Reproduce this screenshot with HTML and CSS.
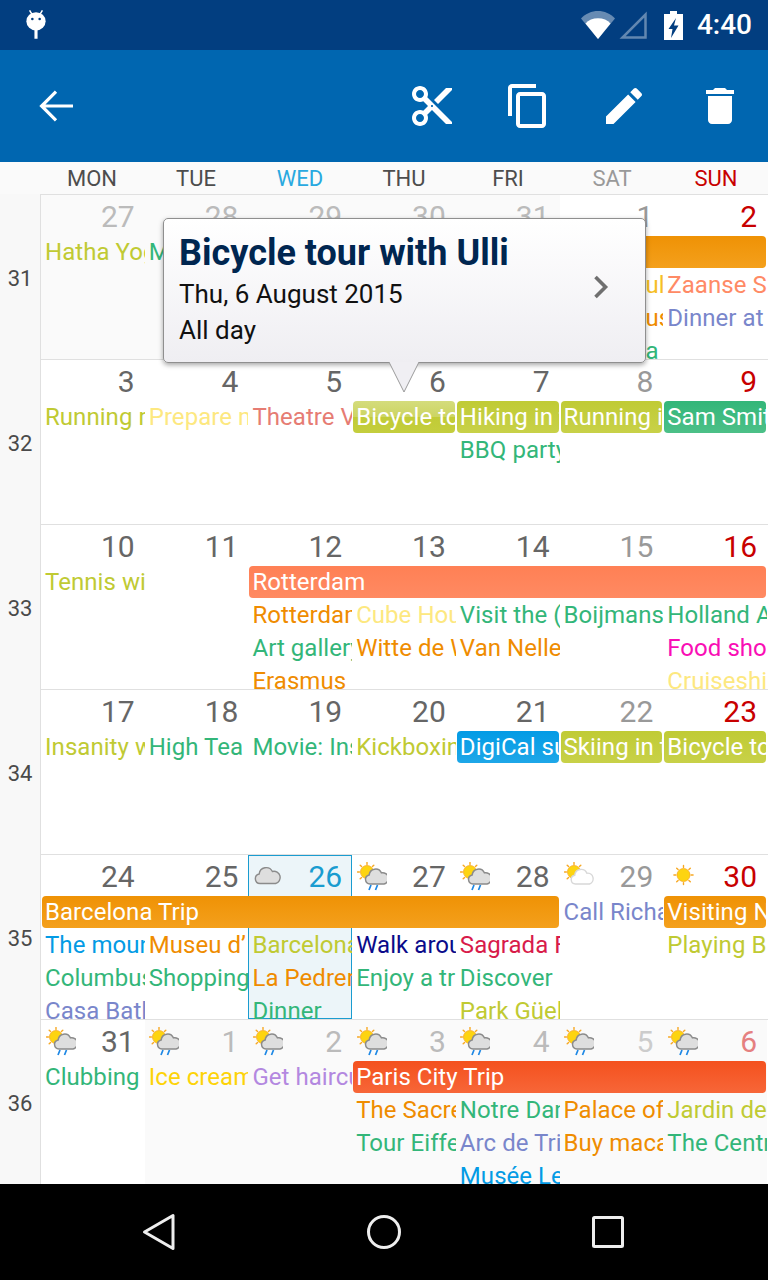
FILE: index.html
```html
<!DOCTYPE html>
<html lang="en">
<head>
<meta charset="utf-8">
<title>Calendar</title>
<link rel="stylesheet" href="styles.css">
</head>
<body>
<svg class="sprite" xmlns="http://www.w3.org/2000/svg">
  <defs>
    <g id="rays" stroke="#f7a823" stroke-width="1.4" stroke-linecap="round">
      <path d="M0-9.6V-7.6M0 9.6V7.6M-9.6 0H-7.6M9.6 0H7.6M-6.8-6.8L-5.4-5.4M6.8 6.8L5.4 5.4M-6.8 6.8L-5.4 5.4M6.8-6.8L5.4-5.4"/>
    </g>
    <path id="cloud" d="M9.5 24.5a4.6 4.6 0 0 1-.8-9.1 6.4 6.4 0 0 1 12.2-2.1 5.7 5.7 0 0 1 2.6 11.2z"/>
  </defs>
  <symbol id="w-rain" viewBox="0 0 30 30">
    <use href="#rays" x="10" y="10"/>
    <circle cx="10" cy="10" r="6.500" fill="#fdd410" stroke="#f7a823" stroke-width=".8"/>
    <use href="#cloud" transform="translate(3.5 -2.5)" fill="#dedede" stroke="#8b8b8b" stroke-width="1.5"/>
    <path d="M14 23l-2 5M20.500 23l-2 5" stroke="#1e88e5" stroke-width="1.700" fill="none"/>
  </symbol>
  <symbol id="w-cloud" viewBox="0 0 30 30">
    <path d="M7 21.500a4.800 4.800 0 0 1-.8-9.500 7 7 0 0 1 13.200-2.500 6.200 6.200 0 0 1 3.200 12z" fill="#dedede" stroke="#8b8b8b" stroke-width="1.400"/>
  </symbol>
  <symbol id="w-pale" viewBox="0 0 30 30">
    <use href="#rays" x="10" y="10"/>
    <circle cx="10" cy="10" r="6.500" fill="#fdd410" stroke="#f7a823" stroke-width=".8"/>
    <path d="M11.500 22a4.400 4.400 0 0 1-.8-8.700 6.400 6.400 0 0 1 12.200-2.100 5.600 5.600 0 0 1 2.600 10.800z" fill="#fff" stroke="#d8d8d8" stroke-width="1.400"/>
  </symbol>
  <symbol id="w-sun" viewBox="0 0 30 30">
    <use href="#rays" x="15.500" y="13"/>
    <circle cx="15.500" cy="13" r="6.500" fill="#fdd410" stroke="#f7a823" stroke-width=".8"/>
  </symbol>
</svg>

<div class="screen">
  <header class="status">
    <svg class="robot" viewBox="0 0 24 32" aria-hidden="true">
      <path d="M5 0L8 5M19 0L16 5" stroke="#fff" stroke-width="1.600"/>
      <ellipse cx="12" cy="12" rx="10.500" ry="10" fill="#fff"/>
      <circle cx="8" cy="9.500" r="1.400" fill="#023e80"/>
      <circle cx="16" cy="9.500" r="1.400" fill="#023e80"/>
      <rect x="10.300" y="21" width="3.400" height="10" fill="#fff"/>
    </svg>
    <div class="status-right">
      <svg class="st-wifi" viewBox="0 0 34 28" aria-hidden="true">
        <path d="M0 7.500C9-2.500 25-2.500 34 7.500L17 28z" fill="#fff" opacity=".4"/>
        <path d="M4.500 12.500C10 5.500 24 5.500 29.500 12.500L17 28z" fill="#fff"/>
      </svg>
      <svg class="st-signal" viewBox="0 0 28 28" aria-hidden="true">
        <path d="M26.500 3.500V26.500H3.500z" fill="none" stroke="#fff" stroke-opacity=".38" stroke-width="2.500"/>
      </svg>
      <svg class="st-batt" viewBox="0 0 19 29" aria-hidden="true">
        <path fill-rule="evenodd" d="M6 0h7v3h6v26H0V3h6zM12 7L4.500 18H8.500L7 27L14.500 14.500H10z" fill="#fff"/>
      </svg>
      <span class="clock">4:40</span>
    </div>
  </header>

  <nav class="appbar">
    <button class="ib" type="button" aria-label="Back"><svg viewBox="0 0 24 24"><path d="M20.500 12H5.500M12 4.800L4.800 12L12 19.200" fill="none" stroke="#fff" stroke-width="1.600"/></svg></button>
    <div class="actions">
      <button class="ib" type="button" aria-label="Cut"><svg viewBox="0 0 24 24"><path fill="#fff" d="M9.640 7.640c.23-.5.36-1.050.36-1.640 0-2.210-1.790-4-4-4S2 3.790 2 6s1.790 4 4 4c.59 0 1.140-.13 1.640-.36L10 12l-2.360 2.360C7.140 14.130 6.590 14 6 14c-2.210 0-4 1.790-4 4s1.790 4 4 4 4-1.790 4-4c0-.59-.13-1.140-.36-1.640L12 14l7 7h3v-1L9.640 7.640zM6 8c-1.100 0-2-.89-2-2s.9-2 2-2 2 .89 2 2-.9 2-2 2zm0 12c-1.100 0-2-.89-2-2s.9-2 2-2 2 .89 2 2-.9 2-2 2zm6-7.500c-.28 0-.5-.22-.5-.5s.22-.5.5-.5.5.22.5.5-.22.5-.5.5zM19 3l-6 6 2 2 7-7V3z"/></svg></button>
      <button class="ib" type="button" aria-label="Copy"><svg viewBox="0 0 24 24"><path fill="#fff" d="M16 1H4c-1.100 0-2 .9-2 2v14h2V3h12V1zm3 4H8c-1.100 0-2 .9-2 2v14c0 1.100.9 2 2 2h11c1.100 0 2-.9 2-2V7c0-1.100-.9-2-2-2zm0 16H8V7h11v14z"/></svg></button>
      <button class="ib" type="button" aria-label="Edit"><svg viewBox="0 0 24 24"><path fill="#fff" d="M3 17.250V21h3.750L17.810 9.940l-3.750-3.750L3 17.250zM20.710 7.040c.39-.39.39-1.020 0-1.410l-2.340-2.340c-.39-.39-1.020-.39-1.410 0l-1.830 1.830 3.750 3.750 1.830-1.830z"/></svg></button>
      <button class="ib" type="button" aria-label="Delete"><svg viewBox="0 0 24 24"><path fill="#fff" d="M6 19c0 1.100.9 2 2 2h8c1.100 0 2-.9 2-2V7H6v12zM19 4h-3.500l-1-1h-5l-1 1H5v2h14V4z"/></svg></button>
    </div>
  </nav>

  <div class="dow">
    <span>MON</span><span>TUE</span><span class="wed">WED</span><span>THU</span><span>FRI</span><span class="sat">SAT</span><span class="sun">SUN</span>
  </div>

  <main class="cal">
    <section class="week">
      <div class="wn">31</div>
      <div class="grid">
        <div class="off c1-5"></div>
        <div class="d c1 n-off">27</div><div class="d c2 n-off">28</div><div class="d c3 n-off">29</div><div class="d c4 n-off">30</div><div class="d c5 n-off">31</div><div class="d c6 n-sat">1</div><div class="d c7 n-sun">2</div>
        <div class="e r1 c1 lime">Hatha Yoga</div>
        <div class="e r1 c2 green">M</div>
        <div class="e bar r1 c6 s2 b-orange"></div>
        <div class="e tail r2 c6 amber">ul</div>
        <div class="e r2 c7 coral">Zaanse Schans</div>
        <div class="e tail r3 c6 orange">us</div>
        <div class="e r3 c7 peri">Dinner at</div>
        <div class="e tail r4 c6 green">a</div>
      </div>
    </section>

    <section class="week">
      <div class="wn">32</div>
      <div class="grid">
        <div class="d c1">3</div><div class="d c2">4</div><div class="d c3">5</div><div class="d c4">6</div><div class="d c5">7</div><div class="d c6 n-sat">8</div><div class="d c7 n-sun">9</div>
        <div class="e r1 c1 lime">Running race</div>
        <div class="e r1 c2 pale">Prepare meal</div>
        <div class="e r1 c3 salmon">Theatre Visit</div>
        <div class="e bar r1 c4 b-sel">Bicycle tour</div>
        <div class="e bar r1 c5 b-lime">Hiking in the</div>
        <div class="e bar r1 c6 b-lime">Running in</div>
        <div class="e bar r1 c7 b-green">Sam Smith</div>
        <div class="e r2 c5 green">BBQ party</div>
      </div>
    </section>

    <section class="week">
      <div class="wn">33</div>
      <div class="grid">
        <div class="d c1">10</div><div class="d c2">11</div><div class="d c3">12</div><div class="d c4">13</div><div class="d c5">14</div><div class="d c6 n-sat">15</div><div class="d c7 n-sun">16</div>
        <div class="e r1 c1 lime">Tennis with</div>
        <div class="e bar r1 c3 s5 b-coral">Rotterdam</div>
        <div class="e r2 c3 orange">Rotterdam</div>
        <div class="e r2 c4 pale">Cube Houses</div>
        <div class="e r2 c5 green">Visit the (</div>
        <div class="e r2 c6 green">Boijmans</div>
        <div class="e r2 c7 green">Holland Amerika</div>
        <div class="e r3 c3 green">Art gallery</div>
        <div class="e r3 c4 orange">Witte de With</div>
        <div class="e r3 c5 orange">Van Nelle</div>
        <div class="e r3 c7 mag">Food show</div>
        <div class="e r4 c3 orange">Erasmus</div>
        <div class="e r4 c7 pale">Cruiseship</div>
      </div>
    </section>

    <section class="week">
      <div class="wn">34</div>
      <div class="grid">
        <div class="d c1">17</div><div class="d c2">18</div><div class="d c3">19</div><div class="d c4">20</div><div class="d c5">21</div><div class="d c6 n-sat">22</div><div class="d c7 n-sun">23</div>
        <div class="e r1 c1 lime">Insanity work</div>
        <div class="e r1 c2 green">High Tea</div>
        <div class="e r1 c3 green">Movie: Inside</div>
        <div class="e r1 c4 lime">Kickboxing</div>
        <div class="e bar r1 c5 b-blue">DigiCal support</div>
        <div class="e bar r1 c6 b-lime">Skiing in the</div>
        <div class="e bar r1 c7 b-lime">Bicycle tour</div>
      </div>
    </section>

    <section class="week">
      <div class="wn">35</div>
      <div class="grid">
        <div class="today"></div>
        <div class="d c1">24</div>
        <div class="d c2">25</div>
        <div class="d c3 n-today"><svg class="wx"><use href="#w-cloud"/></svg>26</div>
        <div class="d c4"><svg class="wx"><use href="#w-rain"/></svg>27</div>
        <div class="d c5"><svg class="wx"><use href="#w-rain"/></svg>28</div>
        <div class="d c6 n-sat"><svg class="wx"><use href="#w-pale"/></svg>29</div>
        <div class="d c7 n-sun"><svg class="wx"><use href="#w-sun"/></svg>30</div>
        <div class="e bar r1 c1 s5 b-orange">Barcelona Trip</div>
        <div class="e r1 c6 peri">Call Richard</div>
        <div class="e bar r1 c7 b-orange">Visiting Nina</div>
        <div class="e r2 c1 blue">The mountain</div>
        <div class="e r2 c2 orange">Museu d’</div>
        <div class="e r2 c3 lime">Barcelona</div>
        <div class="e r2 c4 navy">Walk around</div>
        <div class="e r2 c5 crim">Sagrada Familia</div>
        <div class="e r2 c7 lime">Playing Bass</div>
        <div class="e r3 c1 green">Columbus</div>
        <div class="e r3 c2 green">Shopping</div>
        <div class="e r3 c3 orange">La Pedrera</div>
        <div class="e r3 c4 green">Enjoy a trip</div>
        <div class="e r3 c5 green">Discover</div>
        <div class="e r4 c1 peri">Casa Batllo</div>
        <div class="e r4 c3 green">Dinner</div>
        <div class="e r4 c5 lime">Park Güell</div>
      </div>
    </section>

    <section class="week">
      <div class="wn">36</div>
      <div class="grid">
        <div class="off c2-7"></div>
        <div class="d c1"><svg class="wx"><use href="#w-rain"/></svg>31</div>
        <div class="d c2 n-off"><svg class="wx"><use href="#w-rain"/></svg>1</div>
        <div class="d c3 n-off"><svg class="wx"><use href="#w-rain"/></svg>2</div>
        <div class="d c4 n-off"><svg class="wx"><use href="#w-rain"/></svg>3</div>
        <div class="d c5 n-off"><svg class="wx"><use href="#w-rain"/></svg>4</div>
        <div class="d c6 n-off2"><svg class="wx"><use href="#w-rain"/></svg>5</div>
        <div class="d c7 n-sun-off"><svg class="wx"><use href="#w-rain"/></svg>6</div>
        <div class="e r1 c1 green">Clubbing with</div>
        <div class="e r1 c2 yell">Ice cream</div>
        <div class="e r1 c3 purple">Get haircut</div>
        <div class="e bar r1 c4 s4 b-red">Paris City Trip</div>
        <div class="e r2 c4 orange">The Sacre</div>
        <div class="e r2 c5 green">Notre Dame</div>
        <div class="e r2 c6 orange">Palace of</div>
        <div class="e r2 c7 lime">Jardin des</div>
        <div class="e r3 c4 green">Tour Eiffel</div>
        <div class="e r3 c5 peri">Arc de Triomphe</div>
        <div class="e r3 c6 orange">Buy macarons</div>
        <div class="e r3 c7 green">The Centre</div>
        <div class="e r4 c5 blue">Musée Le</div>
      </div>
    </section>
  </main>

  <footer class="navbar">
    <svg class="nv" viewBox="0 0 40 40" aria-hidden="true"><path d="M33 3.500V36.500L4.500 20z" fill="none" stroke="#eee" stroke-width="3" stroke-linejoin="round"/></svg>
    <svg class="nv" viewBox="0 0 40 40" aria-hidden="true"><circle cx="20" cy="20" r="15.500" fill="none" stroke="#eee" stroke-width="3"/></svg>
    <svg class="nv" viewBox="0 0 40 40" aria-hidden="true"><rect x="5.500" y="5.500" width="29" height="29" rx="1" fill="none" stroke="#eee" stroke-width="3"/></svg>
  </footer>

  <aside class="popup">
    <h1 class="p-title">Bicycle tour with Ulli</h1>
    <p class="p-line p-first">Thu, 6 August 2015</p>
    <p class="p-line">All day</p>
    <svg class="p-chev" viewBox="0 0 16 24" aria-hidden="true"><path d="M2.500 2L12.500 12L2.500 22" fill="none" stroke="#6f6f6f" stroke-width="3.600"/></svg>
    <svg class="p-tail" viewBox="0 0 32 31" aria-hidden="true"><path d="M1 0L16 30L31 0" fill="#f0eff3" stroke="#9a9a9a" stroke-width="1"/></svg>
  </aside>
</div>
</body>
</html>
```

FILE: styles.css
```css
* { box-sizing: border-box; }
html, body { margin: 0; padding: 0; }
body { width: 768px; height: 1280px; overflow: hidden; font-family: Roboto, "Liberation Sans", sans-serif; background: #fff; }
.sprite { display: none; }

.screen { position: relative; width: 768px; height: 1280px; display: flex; flex-direction: column; overflow: hidden; }

/* status bar */
.status { height: 50px; flex: none; background: #023e80; display: flex; align-items: center; justify-content: space-between; padding: 0 16px 0 25px; }
.robot { width: 22px; height: 30px; display: block; }
.status-right { display: flex; align-items: center; }
.st-wifi { width: 34px; height: 28px; margin-right: 4px; }
.st-signal { width: 28px; height: 28px; margin-right: 17px; }
.st-batt { width: 19px; height: 29px; margin-right: 14px; }
.clock { color: #fff; font-size: 28px; font-weight: 500; line-height: 32px; }

/* app bar */
.appbar { height: 112px; flex: none; background: #0066b0; display: flex; align-items: center; justify-content: space-between; padding-left: 8px; }
.actions { display: flex; }
.ib { width: 96px; height: 96px; padding: 0; border: 0; background: none; display: flex; align-items: center; justify-content: center; }
.ib svg { width: 48px; height: 48px; display: block; }

/* weekday header */
.dow { height: 32px; flex: none; background: #fafafa; padding: 0 0 0 40px; display: grid; grid-template-columns: repeat(7, 1fr); font-size: 22px; line-height: 33px; color: #4d4d4d; text-align: center; }
.dow .wed { color: #29a9e0; }
.dow .sat { color: #999; }
.dow .sun { color: #c80000; }

/* calendar */
.cal { flex: 1; min-height: 0; background: #f8f8f8; overflow: hidden; }
.week { height: 165px; display: flex; }
.wn { width: 41px; flex: none; border-right: 1px solid #e0e0e0; font-size: 22px; color: #4a4a4a; display: flex; align-items: center; justify-content: center; padding: 3px 0 0 0; }
.grid { flex: 1; min-width: 0; height: 165px; padding-right: 1px; border-top: 1px solid #e0e0e0; background: #fff; display: grid; grid-template-columns: repeat(7, 1fr); grid-template-rows: 41px 33px 33px 33px 24px; overflow: hidden; }

.off { grid-row: 1 / -1; background: #fafafa; }
.c1-5 { grid-column: 1 / 6; }
.c2-7 { grid-column: 2 / 8; }
.today { grid-row: 1 / -1; grid-column: 3; background: #ecf5f9; border: 1px solid #1a9cd0; }

.c1 { grid-column-start: 1; }
.c2 { grid-column-start: 2; }
.c3 { grid-column-start: 3; }
.c4 { grid-column-start: 4; }
.c5 { grid-column-start: 5; }
.c6 { grid-column-start: 6; }
.c7 { grid-column-start: 7; }
.s2 { grid-column-end: span 2; }
.s4 { grid-column-end: span 4; }
.s5 { grid-column-end: span 5; }
.r1 { grid-row: 2; }
.r2 { grid-row: 3; }
.r3 { grid-row: 4; }
.r4 { grid-row: 5; }

/* day number */
.d { grid-row: 1; position: relative; display: flex; justify-content: flex-end; padding-right: 10px; font-size: 30px; line-height: 44px; height: 41px; color: #666; }
.wx { position: absolute; left: 4.500px; top: 7px; width: 30px; height: 30px; }
.n-off { color: #bbb; }
.n-off2 { color: #ccc; }
.n-sat { color: #999; }
.n-sun { color: #c80000; }
.n-sun-off { color: #e58080; }
.n-today { color: #1a9cd0; }

/* events */
.e { height: 32px; line-height: 32px; font-size: 24px; padding-left: 4px; white-space: nowrap; overflow: hidden; min-width: 0; letter-spacing: .05px; }
.tail { padding-left: 86px; }
.bar { margin: 0 1px; padding-left: 3px; border-radius: 4px; color: #fff; }
.b-orange { background: linear-gradient(#ef9205, #f4a01c); }
.b-coral { background: linear-gradient(#ff8055, #ff8a62); }
.b-green { background: linear-gradient(#33b679, #4cc088); }
.b-lime { background: linear-gradient(#c0cb35, #c8d148); }
.b-sel { background: linear-gradient(#d4dc7c, #ccd462 50%, #c1cb36 50%, #c4ce3e); }
.b-blue { background: linear-gradient(#039be5, #1ea7e8); }
.b-red { background: linear-gradient(#f4511e, #f76638); }

.lime { color: #c0ca33; }
.pale { color: #fde880; }
.salmon { color: #e67c73; }
.green { color: #33b679; }
.orange { color: #ef8c00; }
.amber { color: #f6bf26; }
.peri { color: #7986cb; }
.coral { color: #ff8a65; }
.blue { color: #039be5; }
.navy { color: #0a0a8a; }
.crim { color: #d81b4a; }
.purple { color: #b388e0; }
.yell { color: #fdd308; }
.mag { color: #f90eb5; }

/* bottom nav */
.navbar { height: 96px; flex: none; background: #000; display: flex; align-items: center; justify-content: space-between; padding: 0 140px; }
.nv { width: 40px; height: 40px; display: block; }

/* popup */
.popup { position: absolute; left: 163px; top: 218px; width: 483px; height: 145px; padding: 13px 15px 0; border: 1px solid #8f8f8f; border-radius: 5px; background: linear-gradient(#ffffff, #efeef2); box-shadow: 0 2px 5px rgba(0,0,0,.35); }
.p-title { margin: 0; font-size: 36px; font-weight: 700; line-height: 42px; color: #002650; }
.p-line { margin: 0; font-size: 26px; line-height: 36px; color: #111; }
.p-first { margin-top: 2px; }
.p-chev { position: absolute; right: 36px; top: 56px; width: 16px; height: 24px; }
.p-tail { position: absolute; left: 224px; top: 143px; width: 32px; height: 31px; display: block; }
```
